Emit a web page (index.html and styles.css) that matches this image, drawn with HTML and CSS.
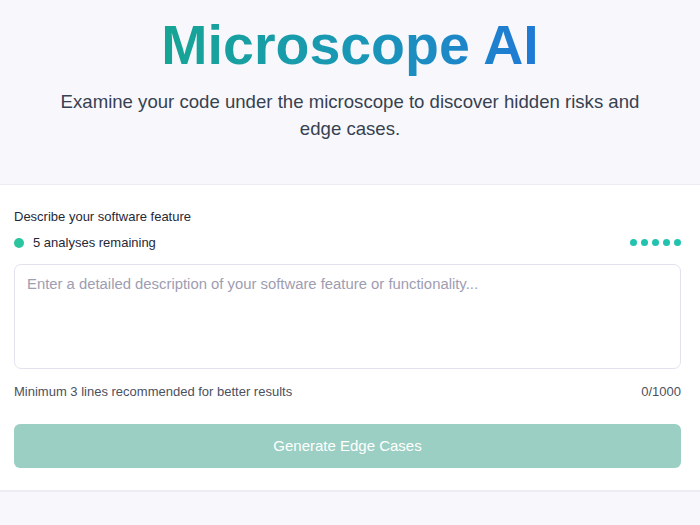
FILE: index.html
```html
<!DOCTYPE html>
<html lang="en">
<head>
<meta charset="utf-8">
<title>Microscope AI</title>
<link rel="stylesheet" href="styles.css">
</head>
<body>
<header class="hero">
  <h1 class="title">Microscope AI</h1>
  <p class="subtitle">Examine your code under the microscope to discover hidden risks and edge cases.</p>
</header>
<main class="card">
  <label class="label" for="feature">Describe your software feature</label>
  <div class="status-row">
    <div class="remaining"><span class="dot"></span>5 analyses remaining</div>
    <div class="pips"><span></span><span></span><span></span><span></span><span></span></div>
  </div>
  <textarea id="feature" class="input" placeholder="Enter a detailed description of your software feature or functionality..."></textarea>
  <div class="meta-row">
    <span>Minimum 3 lines recommended for better results</span>
    <span>0/1000</span>
  </div>
  <button class="generate" type="button">Generate Edge Cases</button>
</main>
</body>
</html>
```
FILE: styles.css
```css
* { box-sizing: border-box; }
html, body { margin: 0; }
body {
  background: #f8f8fc;
  font-family: "Liberation Sans", Arial, sans-serif;
  color: #1f2937;
}
.hero {
  text-align: center;
  padding: 12px 20px 42px;
}
.title {
  margin: 0 auto;
  font-size: 55.5px;
  line-height: 1.2;
  font-weight: 700;
  background: linear-gradient(90deg, #16a594 0%, #1a96b8 55%, #2079d6 100%);
  -webkit-background-clip: text;
  background-clip: text;
  color: transparent;
  width: max-content;
}
.subtitle {
  margin: 9px auto 0;
  max-width: 620px;
  font-size: 18.6px;
  line-height: 27px;
  color: #374151;
}
.card {
  background: #ffffff;
  border-top: 1px solid #ececf3;
  border-bottom: 2px solid #ececf3;
  padding: 22px 19px 22px 14px;
  display: flex;
  flex-direction: column;
}
.label {
  font-size: 13px;
  line-height: 20px;
  color: #1f2937;
}
.status-row {
  margin-top: 6px;
  display: flex;
  justify-content: space-between;
  align-items: center;
  height: 20px;
}
.remaining {
  display: flex;
  align-items: center;
  font-size: 13px;
  color: #1f2937;
}
.dot {
  width: 10px;
  height: 10px;
  border-radius: 50%;
  background: #2cc59f;
  margin: 0 9px 0 0;
}
.pips { display: flex; gap: 4px; }
.pips span {
  width: 7px;
  height: 7px;
  border-radius: 50%;
  background: #22c3ae;
}
.input {
  margin-top: 11px;
  height: 105px;
  width: 100%;
  resize: none;
  border: 1.5px solid #e3e2ef;
  border-radius: 7px;
  padding: 8px 12px;
  font-family: "Liberation Sans", Arial, sans-serif;
  font-size: 14.85px;
  line-height: 22px;
  color: #1f2937;
  background: #fff;
  outline: none;
}
.input::placeholder { color: #9e9db1; }
.meta-row {
  margin-top: 13px;
  display: flex;
  justify-content: space-between;
  font-size: 13px;
  line-height: 20px;
  color: #4b5061;
}
.generate {
  margin-top: 22px;
  height: 44px;
  border: none;
  border-radius: 6px;
  background: #9bcfc3;
  color: #ffffff;
  font-family: "Liberation Sans", Arial, sans-serif;
  font-size: 15px;
}
```
